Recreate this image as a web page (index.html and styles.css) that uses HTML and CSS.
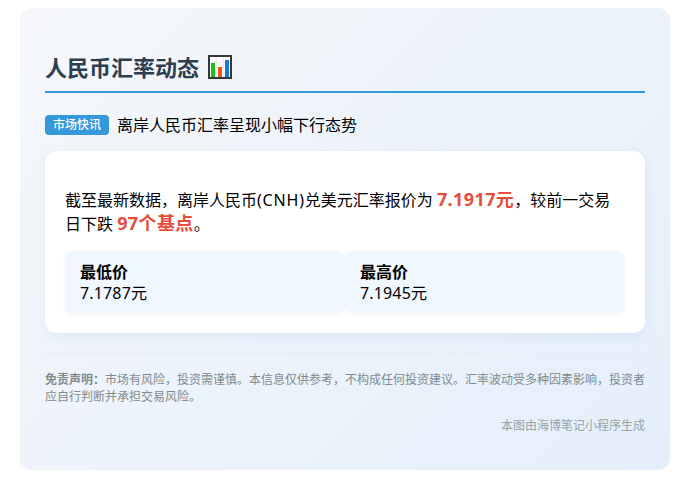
FILE: index.html
```html
<!DOCTYPE html>
<html lang="zh-CN">
<head>
<meta charset="utf-8">
<title>人民币汇率动态</title>
<link rel="stylesheet" href="styles.css">
</head>
<body>
<main class="panel">
  <h1 class="title">人民币汇率动态
    <svg class="chart-icon" viewBox="0 0 24 24" aria-hidden="true">
      <rect x="1" y="1" width="22" height="22" fill="#fff" stroke="#33383b" stroke-width="2"/>
      <path d="M2 7.5h20M2 12.5h20M2 17.5h20M8.5 2v20M15.5 2v20" stroke="#ebebeb" stroke-width="1" fill="none"/>
      <rect x="3" y="8" width="4" height="14" fill="#18c21c"/>
      <rect x="10" y="12" width="4" height="10" fill="#f4511e"/>
      <rect x="17" y="5" width="4" height="17" fill="#1c78d0"/>
    </svg>
  </h1>
  <div class="headline">
    <span class="tag">市场快讯</span>
    <span class="headline-text">离岸人民币汇率呈现小幅下行态势</span>
  </div>
  <section class="card">
    <p class="summary">截至最新数据，离岸人民币<span class="latin">(CNH)</span>兑美元汇率报价为 <strong class="hot">7.1917元</strong>，较前一交易日下跌 <strong class="hot">97个基点</strong>。</p>
    <div class="stats">
      <div class="stat"><strong class="stat-label">最低价</strong><span class="value">7.1787元</span></div>
      <div class="stat"><strong class="stat-label">最高价</strong><span class="value">7.1945元</span></div>
    </div>
  </section>
  <footer class="foot">
    <p class="disclaimer"><strong>免责声明：</strong>市场有风险，投资需谨慎。本信息仅供参考，不构成任何投资建议。汇率波动受多种因素影响，投资者应自行判断并承担交易风险。</p>
    <p class="credit">本图由海博笔记小程序生成</p>
  </footer>
</main>
</body>
</html>
```
FILE: styles.css
```css
* { box-sizing: border-box; }
html, body { margin: 0; background: #fff; }
body {
  padding: 8px 20px 32px;
  font-family: "Noto Sans", "Noto Sans CJK SC", sans-serif;
  color: #000;
}
.panel {
  width: 650px;
  height: 462px;
  padding: 25px;
  border-radius: 12px;
  background: linear-gradient(135deg, #f5f7fa 0%, #e4efFb 100%);
}
.title {
  display: flex;
  align-items: center;
  gap: 9px;
  margin: 12px 0 0;
  height: 48px;
  padding-bottom: 2px;
  border-bottom: 2px solid #3498db;
  font-size: 22px;
  line-height: 44px;
  font-weight: 700;
  color: #2c3e50;
}
.chart-icon { width: 24px; height: 24px; flex: none; }
.headline {
  display: flex;
  align-items: center;
  gap: 8px;
  margin-top: 22px;
  height: 20px;
}
.tag {
  width: 64px;
  height: 20px;
  border-radius: 4px;
  background: #3498db;
  color: #fff;
  font-size: 12px;
  font-weight: 500;
  line-height: 20px;
  text-align: center;
}
.headline-text { font-size: 16px; line-height: 20px; }
.card {
  height: 182px;
  margin-top: 16px;
  padding: 37px 20px 0;
  border-radius: 12px;
  background: #fff;
  box-shadow: 0 4px 12px rgba(52, 120, 200, 0.08);
}
.summary {
  height: 50px;
  margin: 0;
  font-size: 16px;
  line-height: 24px;
}
.latin { letter-spacing: 0.8px; }
.hot {
  color: #e74c3c;
  font-size: 18px;
  font-weight: 700;
  line-height: 1;
  letter-spacing: 0.4px;
}
.stats {
  display: flex;
  margin-top: 13px;
}
.stat {
  flex: 1;
  display: flex;
  flex-direction: column;
  height: 62px;
  padding: 11px 15px 0;
  border-radius: 8px;
  background: #f0f7ff;
  box-shadow: 0 2px 5px rgba(0, 0, 0, 0.03);
  font-size: 16px;
  line-height: 21px;
}
.stat-label { font-weight: 700; }
.value { letter-spacing: 0.15px; }
.foot {
  margin-top: 20px;
  padding-top: 17px;
  border-top: 1px solid #e6ebf0;
}
.disclaimer {
  margin: 0 -1px 0 0;
  font-size: 12px;
  line-height: 17px;
  color: #7f8c8d;
}
.credit {
  margin: 12px 0 0;
  font-size: 12px;
  line-height: 18px;
  color: #95a5a6;
  text-align: right;
}
```
